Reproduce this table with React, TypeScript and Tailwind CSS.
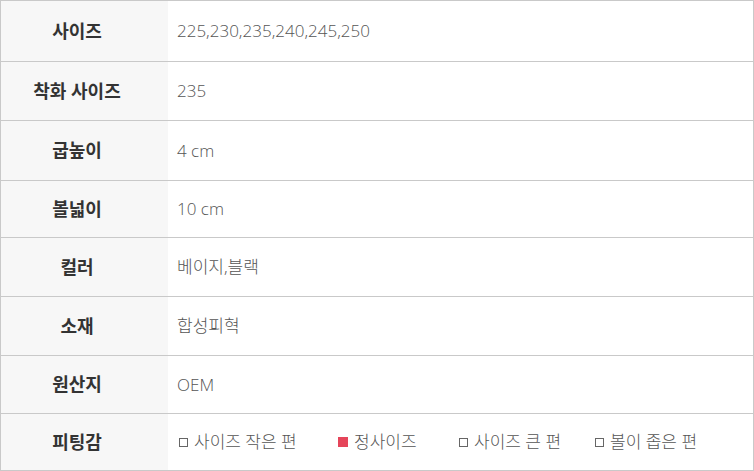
const rows: { label: string; value: string; h: string }[] = [
  { label: "사이즈", value: "225,230,235,240,245,250", h: "h-[61px]" },
  { label: "착화 사이즈", value: "235", h: "h-[59px]" },
  { label: "굽높이", value: "4 cm", h: "h-[60px]" },
  { label: "볼넓이", value: "10 cm", h: "h-[57px]" },
  { label: "컬러", value: "베이지,블랙", h: "h-[59px]" },
  { label: "소재", value: "합성피혁", h: "h-[59px]" },
  { label: "원산지", value: "OEM", h: "h-[58px]" },
];

const fits = [
  { text: "사이즈 작은 편", on: false, w: "w-[161px]" },
  { text: "정사이즈", on: true, w: "w-[119px]" },
  { text: "사이즈 큰 편", on: false, w: "w-[136px]" },
  { text: "볼이 좁은 편", on: false, w: "" },
];

function Row({ label, h, children }: { label: string; h: string; children: React.ReactNode }) {
  return (
    <div className={`flex border-b border-[#c9c9c9] ${h}`}>
      <div className="flex w-[167px] shrink-0 items-center justify-center bg-[#f7f7f7] pr-[15px] text-[18px] font-bold text-[#333]">
        {label}
      </div>
      <div className="flex flex-1 items-center pl-[9px] text-[17px] font-light text-[#555]">
        {children}
      </div>
    </div>
  );
}

export default function App() {
  return (
    <div className="h-[471px] w-[754px] bg-white font-['Open_Sans','Noto_Sans_CJK_KR',sans-serif]">
      <div className="border-x border-t border-[#c9c9c9]">
        {rows.map((row) => (
          <Row h={row.h} key={row.label} label={row.label}>
            {row.value}
          </Row>
        ))}
        <Row h="h-[57px]" label="피팅감">
          <div className="flex items-center">
            {fits.map((fit) => (
              <span className={`flex items-center gap-[5px] ${fit.w}`} key={fit.text}>
                {fit.on ? (
                  <span className="size-[10px] bg-[#e5455a]" />
                ) : (
                  <span className="ml-[2px] size-[9px] border border-[#666]" />
                )}
                <span className="pl-[1px]">{fit.text}</span>
              </span>
            ))}
          </div>
        </Row>
      </div>
    </div>
  );
}
